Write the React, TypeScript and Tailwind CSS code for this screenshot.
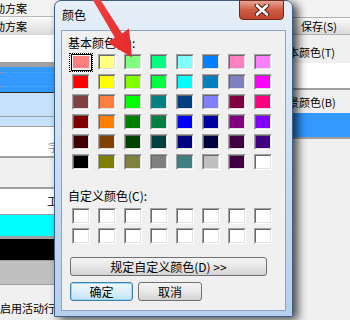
import React from "react";

const BASIC: string[][] = [
  ["#FF8080", "#FFFF80", "#80FF80", "#00FF80", "#80FFFF", "#0080FF", "#FF80C0", "#FF80FF"],
  ["#FF0000", "#FFFF00", "#80FF00", "#00FF40", "#00FFFF", "#0080C0", "#8080C0", "#FF00FF"],
  ["#804040", "#FF8040", "#00FF00", "#008080", "#004080", "#8080FF", "#800040", "#FF0080"],
  ["#800000", "#FF8000", "#008000", "#008040", "#0000FF", "#0000A0", "#800080", "#8000FF"],
  ["#400000", "#804000", "#004000", "#004040", "#000080", "#000040", "#400040", "#400080"],
  ["#000000", "#808000", "#808040", "#808080", "#408080", "#C0C0C0", "#400040", "#FFFFFF"],
];

const CUSTOM: string[][] = [
  Array(8).fill("#FFFFFF"),
  Array(8).fill("#FFFFFF"),
];

const font = { fontFamily: '"Noto Sans CJK SC", "Noto Sans", sans-serif' };

function Swatch({ color, selected }: { color: string; selected?: boolean }) {
  if (selected) {
    return (
      <div className="relative w-[18px] h-[16px]">
        <div className="absolute -left-[3px] -top-[1px] w-[24px] h-[19px] border border-dotted border-black" />
        <div className="absolute -left-[1px] top-0 w-[21px] h-[17px] border border-black" />
        <div className="absolute left-[1px] top-[2px] w-[16px] h-[12px]" style={{ background: color }} />
      </div>
    );
  }
  return (
    <div className="w-[18px] h-[16px] border-t border-l border-t-[#a0a0a0] border-l-[#a0a0a0] border-r border-b border-r-white border-b-white">
      <div
        className="w-full h-full border-t border-l border-t-[#696969] border-l-[#696969] border-r border-b border-r-[#e3e3e3] border-b-[#e3e3e3]"
        style={{ background: color }}
      />
    </div>
  );
}

function SwatchGrid({ rows, first }: { rows: string[][]; first?: boolean }) {
  return (
    <div className="ml-[10px] flex flex-col gap-[4px]">
      {rows.map((r, i) => (
        <div key={i} className="flex gap-[8px]">
          {r.map((c, j) => (
            <Swatch key={j} color={c} selected={first && i === 0 && j === 0} />
          ))}
        </div>
      ))}
    </div>
  );
}

function Dialog() {
  return (
    <div
      className="absolute left-[54px] top-0 w-[239px] h-[317px] flex flex-col rounded-t-[7px] border border-[#3d5f86] bg-gradient-to-b from-[#e6eff9] via-[#cadef2] to-[#b6cfeb] shadow-[5px_3px_10px_rgba(0,0,0,0.7)]"
      style={font}
    >
      <div className="h-[29px] flex items-start justify-between">
        <div className="pl-[7px] pt-[7px] text-[12px] leading-[14px] text-black">颜色</div>
        <div className="mr-[8px] -mt-[1px] w-[45px] h-[20px] rounded-b-[4px] border border-[#6d2a22] bg-gradient-to-b from-[#e8a495] via-[#cf5a44] to-[#c0442c] flex items-center justify-center">
          <svg width="16" height="12" viewBox="0 0 16 12">
            <path d="M3 1.5 L13 10.5 M13 1.5 L3 10.5" stroke="#4a1d18" strokeWidth="4.6" fill="none" strokeLinecap="round" />
            <path d="M3 1.5 L13 10.5 M13 1.5 L3 10.5" stroke="#ffffff" strokeWidth="2.6" fill="none" strokeLinecap="round" />
          </svg>
        </div>
      </div>
      <div className="mx-[6px] flex-1 border border-[#8da3c0] bg-[#f0f0f0] flex flex-col text-[12px] leading-[14px] text-black">
        <div className="ml-[6px] mt-[5px]">基本颜色(B):</div>
        <div className="mt-[4px]">
          <SwatchGrid rows={BASIC} first />
        </div>
        <div className="ml-[6px] mt-[19px]">自定义颜色(C):</div>
        <div className="mt-[5px]">
          <SwatchGrid rows={CUSTOM} />
        </div>
        <div className="ml-[8px] mt-[13px] w-[197px] h-[19px] rounded-[3px] border border-[#707070] bg-gradient-to-b from-[#f4f4f4] via-[#e8e8e8] to-[#d2d2d2] flex items-center justify-center">
          规定自定义颜色(D) &gt;&gt;
        </div>
        <div className="ml-[8px] mt-[6px] flex gap-[5px]">
          <div className="w-[63px] h-[19px] rounded-[3px] border border-[#3c7fb1] bg-gradient-to-b from-[#f0f8fd] via-[#dcf0fb] to-[#bfe3f8] flex items-center justify-center shadow-[inset_0_0_0_1px_#9fd6f5]">
            确定
          </div>
          <div className="w-[64px] h-[19px] rounded-[3px] border border-[#707070] bg-gradient-to-b from-[#f4f4f4] via-[#e8e8e8] to-[#d2d2d2] flex items-center justify-center">
            取消
          </div>
        </div>
      </div>
      <div className="h-[5px]" />
    </div>
  );
}

function Arrow() {
  return (
    <svg className="absolute left-0 top-0 pointer-events-none" width="350" height="320" viewBox="0 0 350 320">
      <defs>
        <linearGradient id="ar" x1="0" y1="0" x2="1" y2="1">
          <stop offset="0" stopColor="#f04040" />
          <stop offset="1" stopColor="#e82a2a" />
        </linearGradient>
      </defs>
      <polygon
        points="91.3,-2.7 114.8,37.5 107.5,42.5 132,57.5 129,28.5 122.1,33.6 96.8,-5.8"
        fill="url(#ar)"
      />
    </svg>
  );
}

export default function App() {
  const bg = { fontFamily: '"Noto Sans CJK SC", "Noto Sans", sans-serif' };
  return (
    <div className="relative w-[350px] h-[320px] overflow-hidden bg-[#f0f0f0] flex text-[11px] leading-[13px] text-black" style={bg}>
      {/* left background column */}
      <div className="w-[54px] flex flex-col overflow-hidden">
        <div className="h-[17px] bg-[#f3f3f3] border-b border-[#b8b8b8] whitespace-nowrap pt-[2px]">
          <span className="ml-[-6px]">动方案</span>
        </div>
        <div className="h-[18px] bg-gradient-to-b from-[#fbfbfb] to-[#d9d9d9] whitespace-nowrap pt-[3px]">
          <span className="ml-[-6px]">动方案</span>
        </div>
        <div className="h-[27px] bg-white" />
        <div className="h-[5px] bg-[#a0a0a0]" />
        <div className="h-[25px] bg-[#3399ff] flex flex-col justify-center gap-[13px]">
          <div className="border-t border-dotted border-[#e08a3c]" />
          <div className="border-t border-dotted border-[#e08a3c]" />
        </div>
        <div className="h-[1px] bg-[#2a2a2a]" />
        <div className="h-[23px] bg-[#c6e2fb]" />
        <div className="h-[1px] bg-[#a0a0a0]" />
        <div className="h-[9px] bg-[#c6e2fb]" />
        <div className="h-[1px] bg-[#a0a0a0]" />
        <div className="h-[29px] bg-white flex items-end justify-end pb-[2px]">
          <span className="mr-[-5px] text-[#9a9a9a]">字</span>
        </div>
        <div className="h-[2px] bg-[#a0a0a0]" />
        <div className="h-[29px] bg-[#f0f0f0]" />
        <div className="h-[2px] bg-[#a0a0a0]" />
        <div className="h-[25px] bg-white flex items-center justify-end">
          <span className="mr-[-4px]">工</span>
        </div>
        <div className="h-[1px] bg-[#a0a0a0]" />
        <div className="h-[21px] bg-[#00ffff]" />
        <div className="h-[3px] bg-[#a0a0a0]" />
        <div className="h-[21px] bg-black" />
        <div className="h-[1px] bg-[#a0a0a0]" />
        <div className="h-[23px] bg-[#c0c0c0]" />
        <div className="h-[1px] bg-[#a0a0a0]" />
        <div className="flex-1 bg-[#f0f0f0] whitespace-nowrap pt-[17px]">启用活动行</div>
      </div>
      <div className="flex-1" />
      {/* right background column */}
      <div className="w-[58px] flex flex-col overflow-hidden whitespace-nowrap">
        <div className="h-[17px] bg-[#f3f3f3]" />
        <div className="h-[18px] border-y border-[#b0b0b0] bg-gradient-to-b from-[#fbfbfb] to-[#d9d9d9] pl-[9px] pt-[2px]">保存(S)</div>
        <div className="h-[28px] pt-[11px]">
          <span className="ml-[-4px]">本颜色(T)</span>
        </div>
        <div className="h-[25px] bg-white" />
        <div className="h-[2px] bg-[#a0a0a0]" />
        <div className="h-[23px] pt-[6px]">
          <span className="ml-[-4px]">景颜色(B)</span>
        </div>
        <div className="h-[24px] bg-[#3399ff]" />
        <div className="h-[2px] bg-[#a0a0a0]" />
        <div className="flex-1 bg-[#f0f0f0]" />
      </div>
      <Dialog />
      <Arrow />
    </div>
  );
}
